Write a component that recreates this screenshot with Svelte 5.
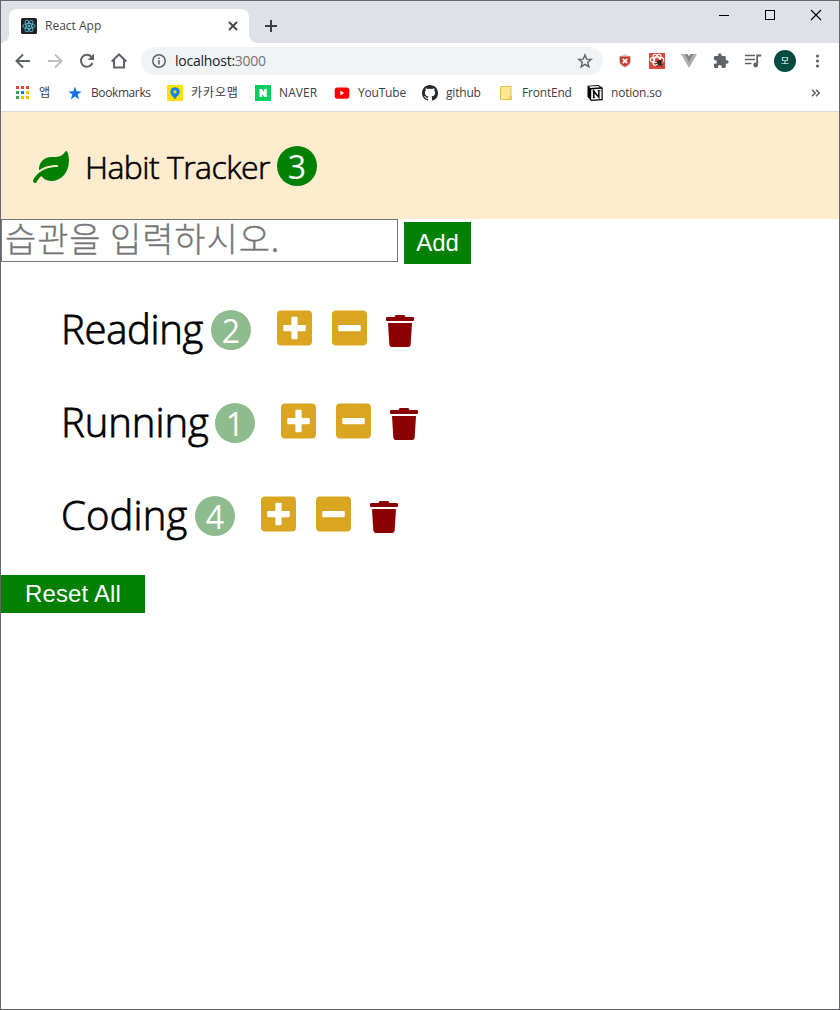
<script>
  const habits = [
    { name: 'Reading', count: 2, width: 150, spacing: -0.3 },
    { name: 'Running', count: 1, width: 154, spacing: -0.05 },
    { name: 'Coding', count: 4, width: 134, spacing: 0.15 }
  ];
  const total = habits.length;
  const bookmarks = [
    { id: 'apps', label: '앱', width: 52 },
    { id: 'star', label: 'Bookmarks', width: 100 },
    { id: 'kakao', label: '카카오맵', width: 88 },
    { id: 'naver', label: 'NAVER', width: 79 },
    { id: 'youtube', label: 'YouTube', width: 88 },
    { id: 'github', label: 'github', width: 76 },
    { id: 'folder', label: 'FrontEnd', width: 89 },
    { id: 'notion', label: 'notion.so', width: 100 }
  ];
  const appColors = ['#ea4335', '#ea4335', '#ea4335', '#34a853', '#1a73e8', '#fbbc04', '#34a853', '#fbbc04', '#fbbc04'];
  const square = 'M400 32H48C21.5 32 0 53.5 0 80v352c0 26.5 21.5 48 48 48h352c26.5 0 48-21.5 48-48V80c0-26.5-21.5-48-48-48z';
</script>

<div class="window">
  <div class="tabstrip">
    <div class="tab">
      <svg class="favicon" width="16" height="16" viewBox="0 0 16 16">
        <rect width="16" height="16" rx="1.5" fill="#222" />
        <g fill="none" stroke="#53b9d1" stroke-width="0.9">
          <ellipse cx="8" cy="8" rx="6.3" ry="2.5" />
          <ellipse cx="8" cy="8" rx="6.3" ry="2.5" transform="rotate(60 8 8)" />
          <ellipse cx="8" cy="8" rx="6.3" ry="2.5" transform="rotate(120 8 8)" />
        </g>
        <circle cx="8" cy="8" r="1.3" fill="#53b9d1" />
      </svg>
      <span class="title">React App</span>
      <svg class="close" width="10" height="10" viewBox="0 0 10 10"><path d="M1 1l8 8M9 1l-8 8" stroke="#45494d" stroke-width="1.9" /></svg>
    </div>
    <svg class="newtab" width="12" height="12" viewBox="0 0 12 12"><path d="M6 0v12M0 6h12" stroke="#3c4043" stroke-width="2" /></svg>
    <div class="controls">
      <svg width="46" height="30" viewBox="0 0 46 30"><path d="M18 14.5h10" stroke="#000" /></svg>
      <svg width="46" height="30" viewBox="0 0 46 30"><rect x="18.5" y="9.5" width="9" height="9" fill="none" stroke="#000" /></svg>
      <svg width="46" height="30" viewBox="0 0 46 30"><path d="M18 9l10 10M28 9l-10 10" stroke="#000" stroke-width="1.1" /></svg>
    </div>
  </div>

  <div class="toolbar">
    <div class="nav">
      <svg width="32" height="32" viewBox="0 0 32 32"><path d="M23 16H10M16 9.5L9.5 16l6.5 6.5" fill="none" stroke="#5f6368" stroke-width="2" /></svg>
      <svg width="32" height="32" viewBox="0 0 32 32"><path d="M9 16h13M16 9.5l6.5 6.5-6.5 6.5" fill="none" stroke="#bdbfc1" stroke-width="2" /></svg>
      <svg width="32" height="32" viewBox="0 0 32 32"><path d="M21.5 18a6 6 0 1 1-1-6.2" fill="none" stroke="#5f6368" stroke-width="2" /><path d="M23 8.5v6.5h-6.5z" fill="#5f6368" /></svg>
      <svg width="32" height="32" viewBox="0 0 32 32"><path d="M8.7 16.5L16 9.5l7.3 7M11 15v7.5h10V15" fill="none" stroke="#5f6368" stroke-width="2" /></svg>
    </div>
    <div class="omnibox">
      <svg width="14" height="14" viewBox="0 0 14 14"><circle cx="7" cy="7" r="6.2" fill="none" stroke="#5f6368" stroke-width="1.5" /><path d="M7 6.2v4.3M7 3.5v1.6" stroke="#5f6368" stroke-width="1.6" /></svg>
      <span class="url">localhost:<i>3000</i></span>
      <svg class="fav" width="16" height="16" viewBox="0 0 16 16"><path d="M8 1.9l1.7 4.2 4.5.3-3.5 2.9 1.1 4.4L8 11.3l-3.800 2.4 1.1-4.4-3.5-2.9 4.500-.3z" fill="none" stroke="#5f6368" stroke-width="1.4" /></svg>
    </div>
    <div class="extensions">
      <svg width="32" height="32" viewBox="0 0 32 32"><path d="M10 11q4 0 6-2 2 2 6 2v5q0 4-6 7-6-3-6-7z" fill="#c9cdcf" /><path d="M11 11.5h10V16.5q0 3-5 5.3-5-2.3-5-5.3z" fill="#cf3b2e" /><path d="M13.8 13.8l4.4 4.4m0-4.4l-4.4 4.4" stroke="#fff" stroke-width="1.7" /></svg>
      <svg width="32" height="32" viewBox="0 0 32 32"><rect x="8" y="8" width="16" height="16" fill="#d94b3d" /><g fill="none" stroke="#fff" stroke-width="1.2"><ellipse cx="16" cy="14.7" rx="6.8" ry="2.6" /><ellipse cx="16" cy="14.7" rx="6" ry="2.6" transform="rotate(60 16 14.7)" /><ellipse cx="16" cy="14.7" rx="6" ry="2.6" transform="rotate(120 16 14.7)" /></g><ellipse cx="18.5" cy="17.8" rx="2.2" ry="3" fill="#401f1b" /><path d="M14 16l8 4m-8-1l8-3m-6 6l5-8m-5 2l5 6" stroke="#401f1b" stroke-width=".9" /></svg>
      <svg width="32" height="32" viewBox="0 0 32 32"><path d="M8 9h4l4 7 4-7h4l-8 14z" fill="#b0b0b0" /><path d="M11.5 9h3L16 11.3 17.5 9h3L16 17z" fill="#858585" /></svg>
      <svg width="32" height="32" viewBox="0 0 32 32"><g transform="translate(7.5 7.5) scale(.7)"><path d="M20.5 11H19V7c0-1.1-.9-2-2-2h-4V3.5a2.5 2.5 0 0 0-5 0V5H4c-1.1 0-2 .9-2 2v3.8h1.5a2.7 2.7 0 0 1 0 5.4H2V20c0 1.1.9 2 2 2h3.8v-1.5a2.7 2.7 0 0 1 5.4 0V22H17c1.1 0 2-.9 2-2v-4h1.5a2.5 2.5 0 0 0 0-5z" fill="#5f6368" /></g></svg>
      <svg width="32" height="32" viewBox="0 0 32 32"><path d="M8 10.5h10M8 14.5h10M8 18.5h6.5" stroke="#5f6368" stroke-width="1.7" /><path d="M20.2 20.2V10.5h4" fill="none" stroke="#5f6368" stroke-width="1.8" /><circle cx="18.7" cy="20" r="2.4" fill="#5f6368" /></svg>
      <div class="avatar"><span>모</span></div>
      <svg width="32" height="32" viewBox="0 0 32 32"><g fill="#5f6368"><circle cx="16.5" cy="11" r="1.6" /><circle cx="16.5" cy="16" r="1.6" /><circle cx="16.5" cy="21" r="1.6" /></g></svg>
    </div>
  </div>

  <div class="bookmarks">
    {#each bookmarks as b}
      <div class="bookmark" style="width: {b.width}px">
        <svg width="16" height="16" viewBox="0 0 16 16">
          {#if b.id === 'apps'}
            {#each appColors as c, i}
              <rect x={1 + (i % 3) * 5} y={1 + Math.floor(i / 3) * 5} width="3" height="3" fill={c} />
            {/each}
          {:else if b.id === 'star'}
            <path d="M8 1.5l1.7 4.8 5 .1-4 3.1 1.5 4.9L8 11.5l-4.2 2.9 1.5-4.9-4-3.1 5-.1z" fill="#1a73e8" />
          {:else if b.id === 'kakao'}
            <rect width="16" height="16" rx=".5" fill="#ffe100" />
            <path d="M8 2.2a4.7 4.7 0 0 0-4.7 4.7C3.3 10 6.5 11 8 14.5 9.5 11 12.7 10 12.7 6.9A4.7 4.7 0 0 0 8 2.2z" fill="#1283f0" /><circle cx="8" cy="6.8" r="1.6" fill="#ffe100" />
          {:else if b.id === 'naver'}
            <rect width="16" height="16" fill="#05d05c" /><path d="M4.5 4h2.6l2 3.2V4h2.6v8H9.1L7.1 8.900V12H4.500z" fill="#fff" />
          {:else if b.id === 'youtube'}
            <rect x=".7" y="2.5" width="14.6" height="11.3" rx="2.8" fill="#f00" /><path d="M6.3 5.8v4.6l4-2.3z" fill="#fff" />
          {:else if b.id === 'github'}
            <path fill="#24292e" d="M8 0C3.58 0 0 3.58 0 8c0 3.54 2.29 6.53 5.47 7.59.4.07.55-.17.55-.38 0-.19-.01-.82-.01-1.49-2.01.37-2.53-.49-2.69-.94-.09-.23-.48-.94-.82-1.13-.28-.15-.68-.52-.01-.53.63-.01 1.08.58 1.23.82.72 1.21 1.87.87 2.33.66.07-.52.28-.87.51-1.07-1.78-.2-3.64-.89-3.64-3.95 0-.87.31-1.59.82-2.15-.08-.2-.36-1.02.08-2.12 0 0 .67-.21 2.2.82.64-.18 1.32-.27 2-.27s1.36.09 2 .27c1.53-1.04 2.2-.82 2.2-.82.44 1.1.16 1.92.08 2.12.51.56.82 1.27.82 2.15 0 3.07-1.87 3.75-3.65 3.95.29.25.54.73.54 1.48 0 1.07-.01 1.93-.01 2.2 0 .21.15.46.55.38A8.01 8.01 0 0 0 16 8c0-4.42-3.58-8-8-8z" />
          {:else if b.id === 'folder'}
            <path d="M2.5 1.5h10.5v9l.5.5v3.5h-11z" fill="#ffe694" stroke="#e5c044" /><path d="M11.5 14v-3h2" fill="none" stroke="#e5c044" />
          {:else}
            <path d="M.5.8l11-.7 4.2 2.6v12.5L4 16l-3.5-4.2z" fill="#000" /><path d="M1.7 1.6l9.5-.6 1.8 1.3-9.3.6z" fill="#fff" /><path d="M4.2 4.4l10.3-.6v10.3L4.2 14.8z" fill="#fff" /><path d="M6.8 12.8V6.2l5 6V5.5" fill="none" stroke="#000" stroke-width="1.5" /><path d="M5.5 6h2.3M10.5 5.5h3M5.8 12.7h2.3" stroke="#000" stroke-width=".8" />
          {/if}
        </svg>
        <span class={b.id}>{b.label}</span>
      </div>
    {/each}
    <svg class="more" width="10" height="8" viewBox="0 0 10 8"><path d="M1 .8L4.2 4 1 7.2M5 .8L8.2 4 5 7.2" fill="none" stroke="#5f6368" stroke-width="1.6" /></svg>
  </div>

  <header>
    <svg class="leaf" width="36" height="32" viewBox="0 0 576 512"><path fill="green" d="M546.2 9.7c-5.6-12.5-21.6-13-28.3-1.2C486.9 62.4 431.4 96 368 96h-80C182 96 96 182 96 288c0 7 .8 13.7 1.5 20.5C161.3 262.8 253.4 224 384 224c8.8 0 16 7.2 16 16s-7.2 16-16 16C132.6 256 26 410.1 2.4 468c-6.6 16.3 1.2 34.9 17.5 41.6 16.4 6.8 35-1.1 41.8-17.3 1.5-3.6 20.9-47.9 71.9-90.6 32.4 43.9 94 85.8 174.9 77.2C465.5 467.5 576 326.7 576 154.3c0-50.2-10.8-102.2-29.8-144.6z" /></svg>
    <h1>Habit Tracker</h1>
    <span class="count total">{total}</span>
  </header>

  <form onsubmit={(e) => e.preventDefault()}>
    <input placeholder="습관을 입력하시오." />
    <button class="add">Add</button>
  </form>

  <ul>
    {#each habits as h}
      <li>
        <span class="name" style="width: {h.width}px; letter-spacing: {h.spacing}px">{h.name}</span>
        <span class="count">{h.count}</span>
        <svg class="plus" width="35" height="40" viewBox="0 0 448 512"><path fill="goldenrod" d="{square}m-32 252c0 6.6-5.4 12-12 12h-92v92c0 6.6-5.4 12-12 12h-56c-6.6 0-12-5.4-12-12v-92H92c-6.6 0-12-5.4-12-12v-56c0-6.6 5.4-12 12-12h92v-92c0-6.6 5.4-12 12-12h56c6.6 0 12 5.4 12 12v92h92c6.6 0 12 5.4 12 12v56z" /></svg>
        <svg class="minus" width="35" height="40" viewBox="0 0 448 512"><path fill="goldenrod" d="{square}M92 296c-6.6 0-12-5.4-12-12v-56c0-6.6 5.4-12 12-12h264c6.6 0 12 5.4 12 12v56c0 6.6-5.4 12-12 12H92z" /></svg>
        <svg class="trash" width="28" height="32" viewBox="0 0 448 512"><path fill="darkred" d="M432 32H312l-9.4-18.7A24 24 0 0 0 281.1 0H166.8a23.72 23.72 0 0 0-21.4 13.3L136 32H16A16 16 0 0 0 0 48v32a16 16 0 0 0 16 16h416a16 16 0 0 0 16-16V48a16 16 0 0 0-16-16zM53.2 467a48 48 0 0 0 47.9 45h245.8a48 48 0 0 0 47.9-45L416 128H32z" /></svg>
      </li>
    {/each}
  </ul>
  <button class="reset">Reset All</button>
</div>

<style>
  :global(body) { margin: 0; }
  * { box-sizing: border-box; }
  svg { display: block; flex: none; }
  .window { width: 840px; height: 1010px; border: 1px solid #66676b; background: #fff; font-family: "Open Sans", "Noto Sans CJK KR", sans-serif; overflow: hidden; color: #000; }
  .tabstrip { height: 42px; background: #dee1e6; display: flex; align-items: flex-start; }
  .tab { position: relative; width: 240px; height: 34px; margin: 8px 0 0 8px; padding: 0 11px 0 12px; background: #fff; border-radius: 8px 8px 0 0; display: flex; align-items: center; font-size: 12px; color: #45494d; }
  .tab::before, .tab::after { content: ""; position: absolute; bottom: 0; width: 8px; height: 8px; }
  .tab::before { left: -8px; background: radial-gradient(circle at 0 0, transparent 7.5px, #fff 8px); }
  .tab::after { right: -8px; background: radial-gradient(circle at 100% 0, transparent 7.5px, #fff 8px); }
  .title { margin: -2px 0 0 8px; flex: 1; }
  .newtab { margin: 19px 0 0 16px; }
  .controls { display: flex; margin-left: auto; }
  .toolbar { height: 36px; display: flex; align-items: center; padding-left: 6px; }
  .nav, .extensions { display: flex; align-items: center; }
  .omnibox { width: 462px; height: 28px; margin: 0 6px 0 6px; padding: 0 10px 0 11px; border-radius: 14px; background: #f1f3f4; display: flex; align-items: center; font-size: 14px; color: #202124; }
  .url { margin: -2px 0 0 9px; flex: 1; letter-spacing: -0.25px; }
  .url i { font-style: normal; color: #70757a; }
  .avatar { width: 22px; height: 22px; margin: 0 5px; border-radius: 50%; background: #004d40; color: #fff; font: 9px/22px "Noto Sans CJK KR", sans-serif; text-align: center; }
  .bookmarks { height: 33px; padding: 0 0 5px 14px; border-bottom: 1px solid #dadce0; display: flex; align-items: center; font-size: 12px; color: #3c4043; }
  .bookmark { display: flex; align-items: center; white-space: nowrap; }
  .bookmark span { margin-left: 8px; line-height: 16px; letter-spacing: -0.2px; }
  .bookmark .star { letter-spacing: -0.4px; }
  .bookmark .kakao { letter-spacing: 0.9px; }
  .bookmark .naver { letter-spacing: 0.1px; }
  .more { margin-left: auto; margin-right: 18px; }
  header { height: 107px; padding-left: 32px; background: blanchedalmond; display: flex; align-items: center; }
  .leaf { margin-top: 2px; }
  h1 { width: 192px; margin: 2px 0 0 16px; font-size: 32px; font-weight: 300; line-height: 43px; letter-spacing: -0.55px; white-space: nowrap; -webkit-text-stroke: 0.6px #000; }
  .count { width: 40px; height: 40px; border-radius: 50%; background: darkseagreen; color: #fff; font-size: 32px; line-height: 42px; text-align: center; }
  .count.total { background: green; }
  form { display: flex; align-items: flex-start; height: 45px; }
  input { width: 397px; height: 43px; border: 1px solid #767676; padding: 0 2px 7px 3px; font: 34px/34px "Noto Sans CJK KR", sans-serif; font-weight: 300; letter-spacing: 0.9px; outline: none; }
  input::placeholder { color: #757575; opacity: 1; -webkit-text-stroke: 0.3px #757575; }
  button { border: 0; padding: 0; background: green; color: #fff; font: 24px/28px "Liberation Sans", Arial, sans-serif; }
  .add { width: 67px; height: 42px; margin: 3px 0 0 6px; }
  ul { list-style: none; margin: 46px 0 0; padding: 0 0 0 60px; }
  li { display: flex; height: 40px; margin-bottom: 53px; }
  .name { font-size: 40px; font-weight: 300; line-height: 38px; white-space: nowrap; -webkit-text-stroke: 0.8px #000; }
  .plus { margin: -2px 0 0 26px; }
  .minus { margin: -2px 0 0 20px; }
  .trash { margin: 5px 0 0 19px; }
  .reset { display: block; width: 144px; height: 38px; margin-top: -14px; letter-spacing: 0.15px; }
</style>
